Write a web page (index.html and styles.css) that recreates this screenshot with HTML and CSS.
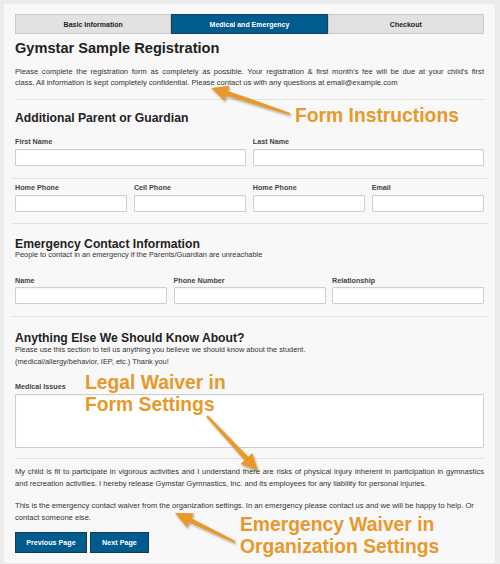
FILE: index.html
```html
<!DOCTYPE html>
<html lang="en">
<head>
<meta charset="utf-8">
<title>Gymstar Sample Registration</title>
<link rel="stylesheet" href="styles.css">
</head>
<body>
<div class="page">
  <form class="card">
    <nav class="tabs">
      <div class="tab">Basic Information</div>
      <div class="tab active">Medical and Emergency</div>
      <div class="tab">Checkout</div>
    </nav>
    <h1 class="title">Gymstar Sample Registration</h1>
    <p class="intro"><span class="fill-line">Please complete the registration form as completely as possible. Your registration &amp; first month's fee will be due at your child's first</span> class. All information is kept completely confidential. Please contact us with any questions at email@example.com</p>
    <hr class="rule">

    <h2 class="section-title first">Additional Parent or Guardian</h2>
    <div class="row cols-2 row-a">
      <label class="field"><span class="label">First Name</span><input class="input" type="text"></label>
      <label class="field"><span class="label">Last Name</span><input class="input" type="text"></label>
    </div>
    <hr class="rule wide">
    <div class="row cols-4 row-b">
      <label class="field"><span class="label">Home Phone</span><input class="input" type="text"></label>
      <label class="field"><span class="label">Cell Phone</span><input class="input" type="text"></label>
      <label class="field"><span class="label">Home Phone</span><input class="input" type="text"></label>
      <label class="field"><span class="label">Email</span><input class="input" type="text"></label>
    </div>
    <hr class="rule wide">

    <h2 class="section-title">Emergency Contact Information</h2>
    <p class="sub">People to contact in an emergency if the Parents/Guardian are unreachable</p>
    <div class="row cols-3 row-c">
      <label class="field"><span class="label">Name</span><input class="input" type="text"></label>
      <label class="field"><span class="label">Phone Number</span><input class="input" type="text"></label>
      <label class="field"><span class="label">Relationship</span><input class="input" type="text"></label>
    </div>
    <hr class="rule wide">

    <h2 class="section-title">Anything Else We Should Know About?</h2>
    <p class="sub two">Please use this section to tell us anything you believe we should know about the student.<br>(medical/allergy/behavior, IEP, etc.) Thank you!</p>
    <div class="row row-d">
      <label class="field"><span class="label">Medical Issues</span><textarea class="input area"></textarea></label>
    </div>
    <hr class="rule last">

    <p class="waiver justified">My child is fit to participate in vigorous activities and I understand there are risks of physical injury inherent in participation in gymnastics and recreation activities. I hereby release Gymstar Gymnastics, Inc. and its employees for any liability for personal injuries.</p>
    <p class="waiver second">This is the emergency contact waiver from the organization settings. In an emergency please contact us and we will be happy to help. Or contact someone else.</p>

    <div class="buttons">
      <button class="btn" type="button">Previous Page</button>
      <button class="btn" type="button">Next Page</button>
    </div>
  </form>

  <div class="annotations">
    <svg class="arrows" width="500" height="564" viewBox="0 0 500 564">
      <defs>
        <filter id="sh" x="-20%" y="-20%" width="140%" height="140%">
          <feDropShadow dx="1" dy="1.5" stdDeviation="1" flood-color="#000" flood-opacity="0.35"/>
        </filter>
      </defs>
      <g fill="#e8992b" filter="url(#sh)">
        <polygon points="211,88 229.6,85.7 227.9,90.9 290.4,112.9 289.6,115.1 226.3,95.7 224.6,100.9"/>
        <polygon points="258,471 252.3,453.1 248.2,456.8 207.9,415.2 206.1,416.8 244.6,460.2 240.5,463.9"/>
        <polygon points="175,513 193.8,513.2 191.4,518.2 235.5,540.9 234.5,543.1 189.2,522.6 186.8,527.6"/>
      </g>
    </svg>
    <div class="note note-form">Form Instructions</div>
    <div class="note note-legal">Legal Waiver in<br>Form Settings</div>
    <div class="note note-emergency">Emergency Waiver in<br>Organization Settings</div>
  </div>
</div>
</body>
</html>
```

FILE: styles.css
```css
* { box-sizing: border-box; }

html, body {
  margin: 0;
  padding: 0;
  background: #ebebeb;
}

body {
  font-family: "Liberation Sans", Arial, sans-serif;
  color: #333;
}

.page {
  position: relative;
  width: 500px;
  height: 564px;
  padding: 4px 5px 0 4px;
}

.card {
  display: block;
  background: #f8f8f8;
  padding: 10px 11px 10px 11px;
}

/* tabs */
.tabs {
  display: flex;
  height: 20px;
}

.tab {
  flex: 1;
  display: flex;
  align-items: center;
  justify-content: center;
  background: #e2e2e2;
  border: 1px solid #c9c9c9;
  font-size: 7px;
  font-weight: bold;
  color: #222;
}

.tab.active {
  background: #005b8e;
  border-color: #1c3d57;
  color: #fff;
}

.title {
  margin: 5px 0 0;
  font-size: 14.6px;
  line-height: 19px;
  font-weight: bold;
  color: #222;
}

.intro {
  margin: 9px 0 0;
  font-size: 7.6px;
  line-height: 10.7px;
  color: #333;
}

.fill-line {
  display: block;
  text-align: justify;
  text-align-last: justify;
}

.rule {
  border: 0;
  height: 1px;
  background: #e1e1e1;
  margin: 10.5px 0 0;
}

.rule.wide {
  margin-left: -3px;
  margin-right: -4px;
  margin-top: 12px;
}

.row-b + .rule.wide {
  margin-top: 11px;
}

.rule.last {
  margin-top: 10px;
}

.section-title {
  margin: 13.5px 0 0;
  font-size: 12.2px;
  line-height: 14px;
  font-weight: bold;
  color: #222;
}

.section-title.first {
  margin-top: 11.5px;
}

.sub {
  margin: -1px 0 0;
  font-size: 7.4px;
  line-height: 10px;
  color: #333;
}

.sub.two {
  line-height: 12px;
}

.row {
  display: grid;
  gap: 6.5px;
}

.cols-2 { grid-template-columns: repeat(2, 1fr); }
.cols-3 { grid-template-columns: repeat(3, 1fr); }
.cols-4 { grid-template-columns: repeat(4, 1fr); }

.row-a { margin-top: 12px; }
.row-b { margin-top: 4.5px; }
.row-c { margin-top: 15.5px; }
.row-d { margin-top: 14.5px; }

.field {
  display: flex;
  flex-direction: column;
}

.label {
  font-size: 7.2px;
  line-height: 10px;
  font-weight: bold;
  color: #444;
  margin-bottom: 1.5px;
}

.input {
  display: block;
  width: 100%;
  height: 17px;
  margin: 0;
  padding: 0;
  background: #fff;
  border: 1px solid #cfcfcf;
  border-radius: 1px;
  box-shadow: inset 0 1px 1px rgba(0,0,0,0.04);
  font: inherit;
}

.input.area {
  height: 54px;
  resize: none;
}

.waiver {
  margin: 7.5px 0 0;
  font-size: 7.6px;
  line-height: 11.8px;
  color: #333;
}

.waiver.justified {
  text-align: justify;
}

.waiver.second {
  margin-top: 10px;
}

.buttons {
  display: flex;
  gap: 3px;
  margin-top: 8px;
}

.btn {
  height: 21px;
  padding: 0;
  background: #005b8e;
  border: 1px solid #123a56;
  color: #fff;
  font-family: "Liberation Sans", Arial, sans-serif;
  font-size: 7.2px;
  font-weight: bold;
}

.btn:first-child { width: 72px; }
.btn:last-child { width: 59px; }

/* annotation overlay */
.annotations {
  position: absolute;
  left: 0;
  top: 0;
  width: 500px;
  height: 564px;
  pointer-events: none;
}

.arrows {
  position: absolute;
  left: 0;
  top: 0;
}

.note {
  position: absolute;
  font-family: "Liberation Sans", Arial, sans-serif;
  font-size: 19.3px;
  line-height: 22px;
  font-weight: bold;
  color: #e8992b;
  white-space: nowrap;
}

.note-form { left: 295px; top: 105px; }
.note-legal { left: 85px; top: 372px; }
.note-emergency { left: 240px; top: 514px; }
```
